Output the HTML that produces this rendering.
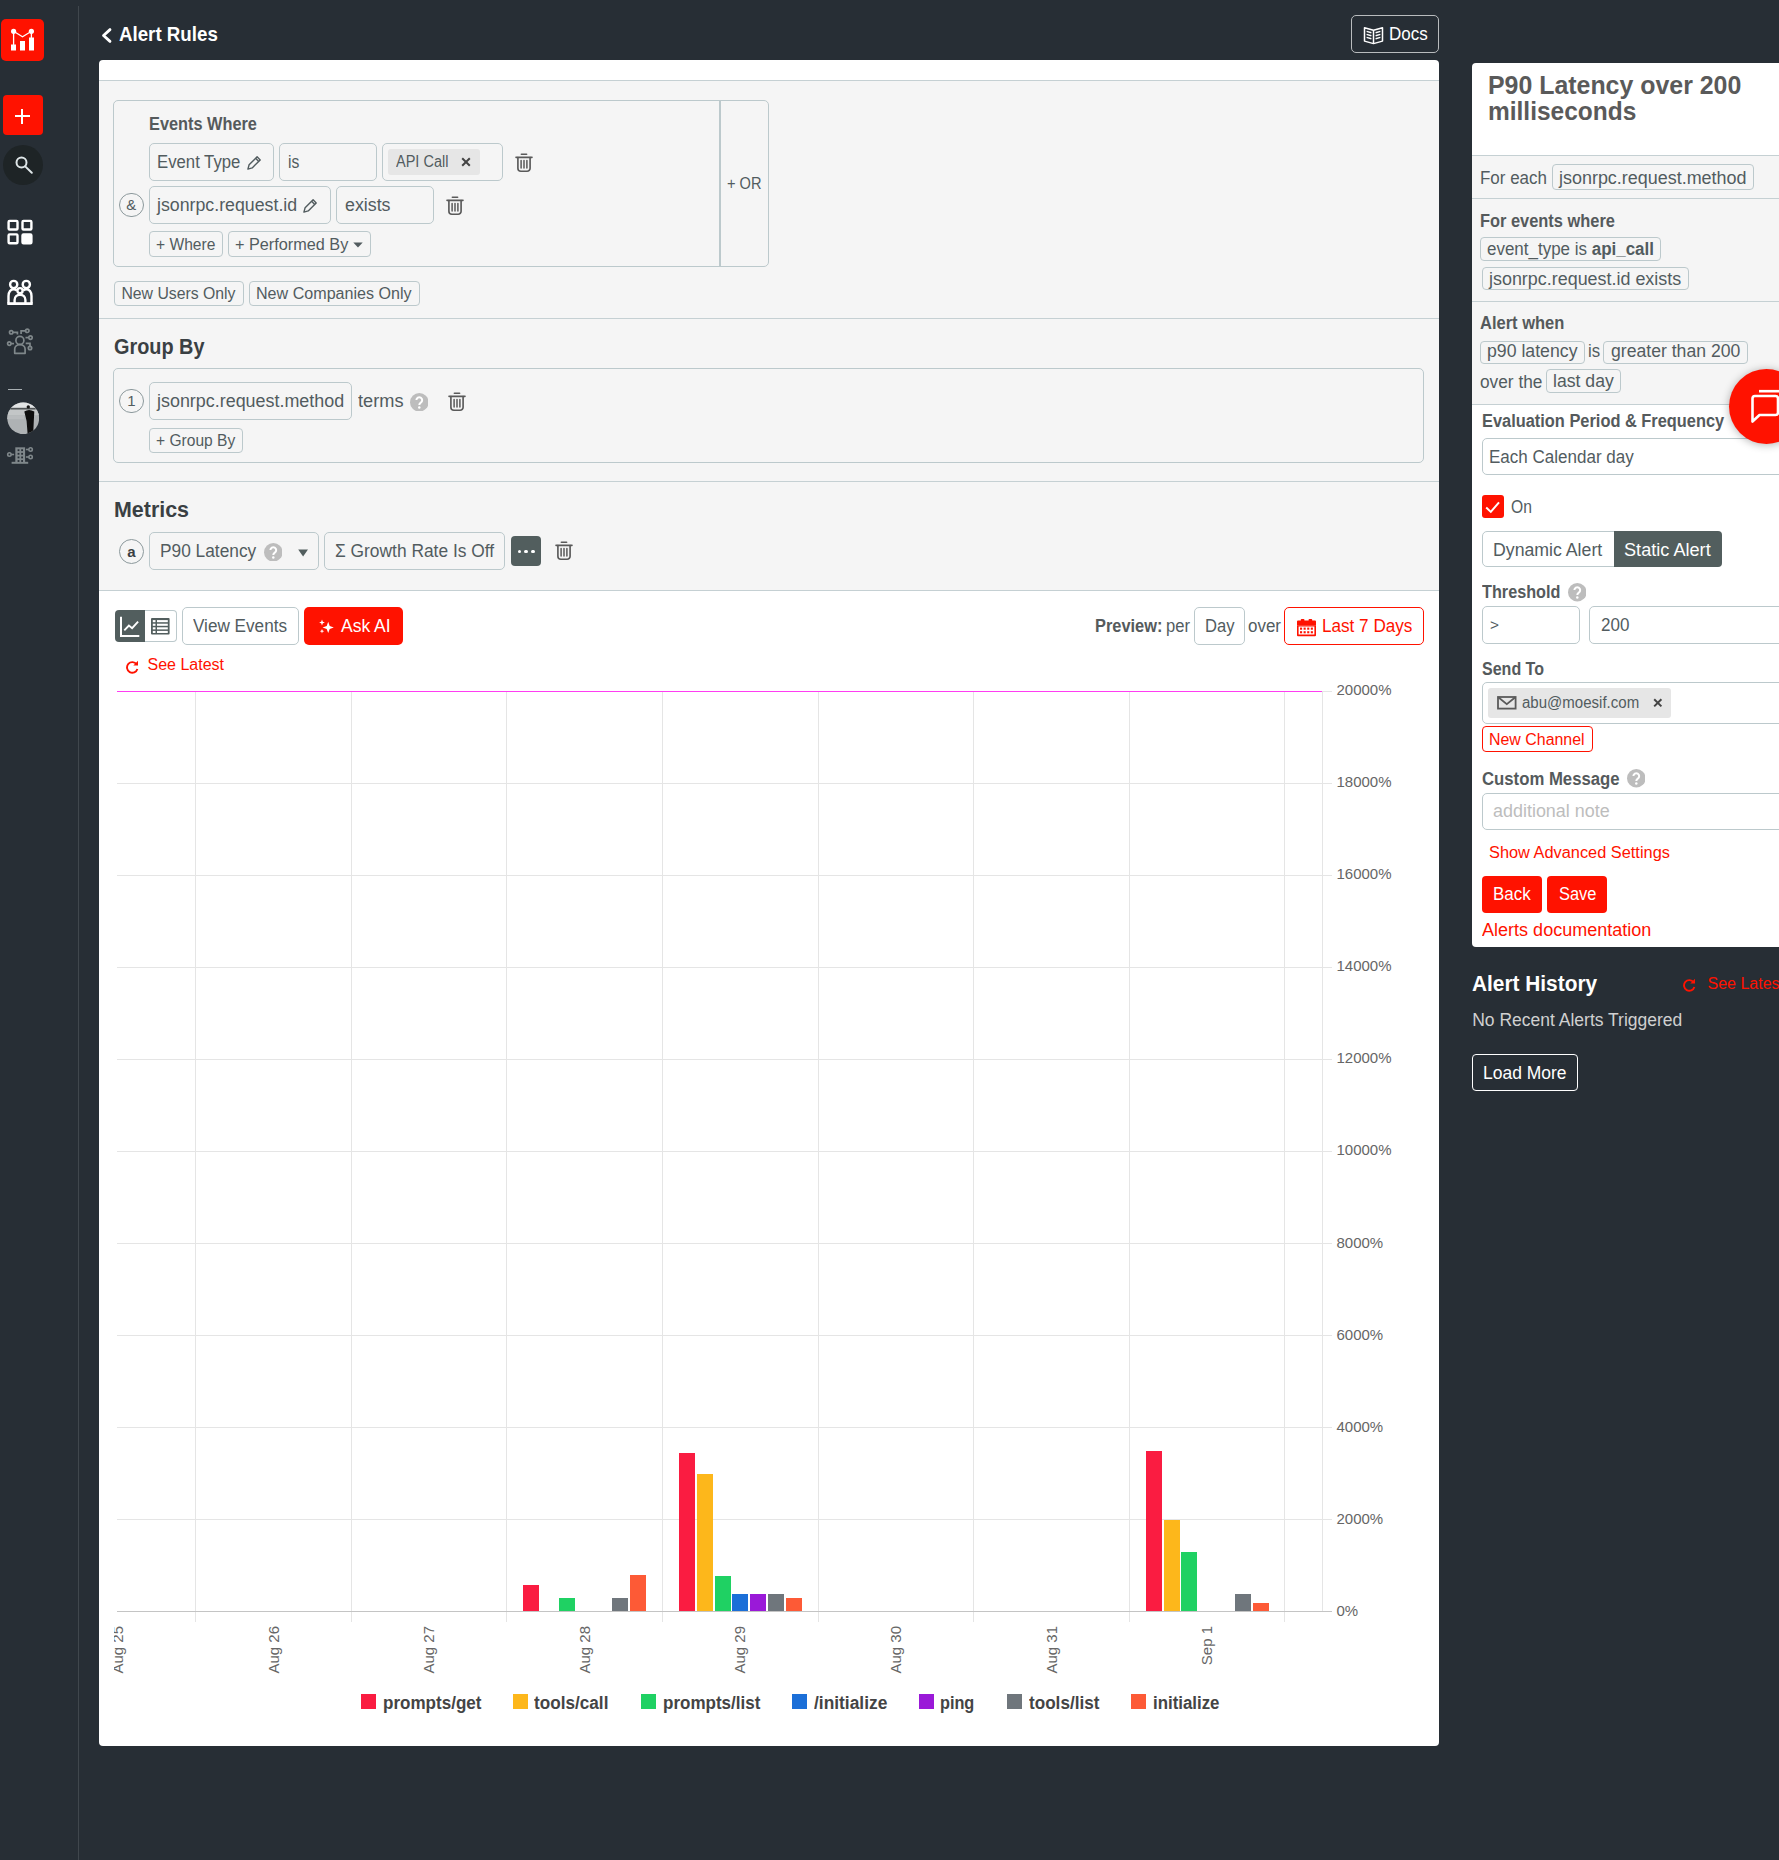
<!DOCTYPE html>
<html lang="en"><head><meta charset="utf-8"><title>Alert Rules</title>
<style>
*{margin:0;padding:0}
html,body{width:1779px;height:1860px;overflow:hidden;background:#272e35;}
body{position:relative;font-family:"Liberation Sans",sans-serif;}
.b{position:absolute;display:block}
.t{position:absolute;white-space:nowrap;line-height:1;transform-origin:0 0}
.xl{font-size:15px;line-height:16px;color:#666;white-space:nowrap;transform-origin:0 0;transform:rotate(-90deg) translate(-100%,-50%)}
b{font-weight:700}
</style></head>
<body>
<div class="b" style="left:78.0px;top:6.0px;width:1.0px;height:1854.0px;background:#40474d;"></div>
<div class="b" style="left:1.0px;top:19.0px;width:43.0px;height:42.0px;background:#ff1200;border-radius:5px;"></div>
<svg class="b" style="left:10.0px;top:28.0px;" width="25" height="24" viewBox="0 0 25 24"><g fill="#fff" stroke="none"><circle cx="3.6" cy="3.3" r="2.6"/><circle cx="21.4" cy="3.3" r="2.6"/><rect x="1" y="16.5" width="5" height="6"/><rect x="10" y="13" width="5" height="9.5"/><rect x="19" y="9.5" width="5" height="13"/></g><path d="M3.6 3.3v14M3.6 3.3l8.9 5.4 8.9-5.4v7" fill="none" stroke="#fff" stroke-width="1.3"/></svg>
<div class="b" style="left:3.0px;top:95.0px;width:40.0px;height:40.0px;background:#ff1200;border-radius:4px;"></div>
<div class="b" style="left:14.7px;top:115.0px;width:15.0px;height:2.0px;background:#fff;"></div>
<div class="b" style="left:21.2px;top:108.5px;width:2.0px;height:15.0px;background:#fff;"></div>
<div class="b" style="left:3.0px;top:145.0px;width:40.0px;height:40.0px;background:#1e2426;border-radius:20px;"></div>
<svg class="b" style="left:14.0px;top:155.0px;" width="20" height="20" viewBox="0 0 20 20"><g fill="none" stroke="#dfe6e8" stroke-width="2"><circle cx="7.5" cy="7.6" r="5"/><path d="M11.2 11.4l6.6 6.4" stroke-linecap="round"/></g></svg>
<svg class="b" style="left:7.0px;top:219.0px;" width="27" height="27" viewBox="0 0 27 27"><g fill="none" stroke="#fff" stroke-width="2.4" stroke-linejoin="round"><rect x="1.6" y="1.9" width="8.9" height="8.6" rx="1"/><rect x="15.5" y="1.9" width="8.9" height="8.6" rx="1"/><rect x="1.6" y="15.4" width="8.9" height="8.9" rx="1"/><rect x="15.5" y="15.4" width="8.9" height="8.9" rx="1" fill="#fff"/></g></svg>
<svg class="b" style="left:6.0px;top:278.0px;" width="28" height="28" viewBox="0 0 28 28"><g fill="none" stroke="#fff" stroke-width="2.4" stroke-linejoin="round"><circle cx="7.7" cy="6.5" r="3.6"/><circle cx="20.3" cy="6.5" r="3.6"/><path d="M2.5 25.5v-7.5c0-4 2.3-6.8 5.2-6.8 1.2 0 2.3 .5 3.2 1.3"/><path d="M25.5 25.5v-7.5c0-4-2.3-6.8-5.2-6.8-1.2 0-2.3 .5-3.2 1.3"/><circle cx="14" cy="12.7" r="2.6"/><path d="M8.6 25.5v-3.5c0-3.2 2.4-5.3 5.4-5.3s5.400 2.100 5.400 5.300v3.500"/><path d="M1.300 25.600h25.400" stroke-width="2.800"/></g></svg>
<svg class="b" style="left:6.0px;top:328.0px;" width="28" height="28" viewBox="0 0 28 28"><g fill="none" stroke="#7f878a" stroke-width="1.700"><circle cx="13.900" cy="12.400" r="4"/><path d="M8.700 25.300v-4.300c0-2.600 2.300-4.400 5.200-4.400s5.200 1.800 5.200 4.400v4.300z" stroke-linejoin="round"/><circle cx="5.200" cy="4.300" r="1.700"/><path d="M6.900 4.300h4.500v2.300"/><circle cx="21.300" cy="2.800" r="1.700"/><path d="M19.600 2.800h-4.500v3.300"/><circle cx="24.500" cy="9.600" r="1.700"/><path d="M22.800 9.600h-3.300"/><circle cx="3.300" cy="15.600" r="1.700"/><path d="M5 15.600h3"/><circle cx="24" cy="20" r="1.700"/><path d="M24 18.300v-3h-4.300"/></g></svg>
<div class="b" style="left:8.0px;top:389.0px;width:14.0px;height:1.3px;background:#a9b0b3;"></div>
<svg class="b" style="left:6.5px;top:401.5px;" width="32.5" height="32.5" viewBox="0 0 32.5 32.5"><defs><clipPath id="av"><circle cx="16.200" cy="16.300" r="15.900"/></clipPath></defs><g clip-path="url(#av)"><rect width="33" height="33" fill="#aeb2b4"/><rect width="33" height="6" fill="#e2e4e5"/><rect x="3.500" y="5.800" width="25" height="1.900" fill="#505456"/><rect y="7.700" width="33" height="5.500" fill="#c3c6c7"/><rect y="13.200" width="17" height="4" fill="#b9bcbe"/><circle cx="21.300" cy="4.900" r="1.700" fill="#151515"/><path d="M17.300 9.600Q21.800 6.300 27.300 9.600L26.800 19 26.200 32H20.600L19.600 19z" fill="#0f0f0f"/></g></svg>
<svg class="b" style="left:6.0px;top:445.0px;" width="28" height="20" viewBox="0 0 28 20"><g fill="none" stroke="#7f878a" stroke-width="1.600"><rect x="9.300" y="2.300" width="9.800" height="15.500" fill="#7f878a" stroke="none"/><path d="M5.600 17.800h16.600" stroke-width="2"/><circle cx="3.400" cy="9.500" r="1.700"/><path d="M5.100 9.500h3"/><circle cx="24.600" cy="4.500" r="1.700"/><path d="M22.900 4.500h-3"/><circle cx="24.600" cy="12" r="1.700"/><path d="M22.900 12h-3"/></g><g fill="#272e35"><rect x="11.6" y="4.3" width="1.800" height="1.800"/><rect x="11.6" y="7.9" width="1.800" height="1.800"/><rect x="11.6" y="11.5" width="1.800" height="1.800"/><rect x="11.6" y="15.1" width="1.800" height="1.800"/><rect x="15.2" y="4.3" width="1.800" height="1.800"/><rect x="15.2" y="7.9" width="1.800" height="1.800"/><rect x="15.2" y="11.5" width="1.800" height="1.800"/><rect x="15.2" y="15.1" width="1.800" height="1.800"/></g></svg>
<svg class="b" style="left:100.0px;top:26.0px;" width="14" height="19" viewBox="0 0 14 19"><path d="M10 3.600L3.500 9.500l6.500 5.900" fill="none" stroke="#fff" stroke-width="2.800" stroke-linecap="round" stroke-linejoin="round"/></svg>
<div class="t" style="left:119.00px;top:23.80px;font-size:20.5px;color:#fff;font-weight:700;transform:scaleX(0.9128);">Alert Rules</div>
<div class="b" style="left:1351.0px;top:15.0px;width:88.0px;height:38.0px;border:1px solid #b9bcbe;border-radius:5px;box-sizing:border-box;"></div>
<svg class="b" style="left:1363.0px;top:25.5px;" width="21" height="19" viewBox="0 0 21 19"><g fill="none" stroke="#fff" stroke-width="1.500" stroke-linejoin="round"><path d="M10.500 4.300L1.500 1.800v13.300l9 2.500 9-2.500V1.800z"/><path d="M10.500 4.300v13.300"/><path d="M3.600 5.400l4.800 1.300M3.600 8.400l4.800 1.300M3.600 11.400l4.800 1.300M17.400 5.400l-4.800 1.300M17.400 8.400l-4.800 1.300M17.400 11.400l-4.800 1.300" stroke-width="1.400"/></g></svg>
<div class="t" style="left:1388.80px;top:25.60px;font-size:17.5px;color:#fff;transform:scaleX(0.9705);">Docs</div>
<div class="b" style="left:99.0px;top:60.0px;width:1340.0px;height:1686.0px;background:#fff;border-radius:4px;"></div>
<div class="b" style="left:99.0px;top:80.0px;width:1340.0px;height:511.0px;background:#f5f5f5;"></div>
<div class="b" style="left:99.0px;top:80.0px;width:1340.0px;height:1.0px;background:#c5d0d3;"></div>
<div class="b" style="left:99.0px;top:318.0px;width:1340.0px;height:1.0px;background:#c5d0d3;"></div>
<div class="b" style="left:99.0px;top:481.0px;width:1340.0px;height:1.0px;background:#c5d0d3;"></div>
<div class="b" style="left:99.0px;top:590.0px;width:1340.0px;height:1.0px;background:#c5d0d3;"></div>
<div class="b" style="left:113.0px;top:100.0px;width:655.5px;height:166.5px;border:1px solid #bcc9cc;border-radius:5px;box-sizing:border-box;"></div>
<div class="b" style="left:719.0px;top:100.0px;width:2.0px;height:166.5px;background:#bcc9cc;"></div>
<div class="t" style="left:148.80px;top:115.70px;font-size:17.5px;color:#555a5c;font-weight:700;transform:scaleX(0.9323);">Events Where</div>
<div class="b" style="left:149.0px;top:143.0px;width:125.0px;height:38.0px;border:1px solid #bcc9cc;border-radius:5px;box-sizing:border-box;"></div>
<div class="t" style="left:156.60px;top:153.90px;font-size:17.5px;color:#525c5f;transform:scaleX(0.9559);">Event Type</div>
<svg class="b" style="left:246.5px;top:155.5px;" width="14" height="14" viewBox="0 0 14 14"><g fill="none" stroke="#525c5f" stroke-width="1.4" stroke-linejoin="round"><path d="M0.9 13.1l1.2-4.3 8-8 3.1 3.1-8 8z"/><path d="M8.6 2.3l3.1 3.1"/></g></svg>
<div class="b" style="left:279.0px;top:143.0px;width:97.5px;height:38.0px;border:1px solid #bcc9cc;border-radius:5px;box-sizing:border-box;"></div>
<div class="t" style="left:288.20px;top:153.90px;font-size:17.5px;color:#525c5f;transform:scaleX(0.8939);">is</div>
<div class="b" style="left:382.0px;top:143.0px;width:120.5px;height:38.0px;border:1px solid #bcc9cc;border-radius:5px;box-sizing:border-box;"></div>
<div class="b" style="left:388.0px;top:149.3px;width:92.0px;height:25.4px;background:#e6e6e6;border-radius:3px;"></div>
<div class="t" style="left:395.80px;top:153.70px;font-size:15.8px;color:#525c5f;transform:scaleX(0.9180);">API Call</div>
<svg class="b" style="left:461.0px;top:157.0px;" width="10" height="10" viewBox="0 0 10 10"><path d="M1.200 1.200l7.600 7.600M8.800 1.200L1.200 8.800" stroke="#444" stroke-width="2" fill="none"/></svg>
<svg class="b" style="left:515.3px;top:153.1px;" width="18" height="20" viewBox="0 0 18 20"><g fill="none" stroke="#5a5a5a" stroke-width="1.65" stroke-linecap="round"><path d="M6.4 1.2h5.2"/><path d="M1 4.3h16"/><path d="M2.9 4.6v10.6a3 3 0 0 0 3 3h6.2a3 3 0 0 0 3-3V4.6"/><path d="M6.1 7.4v7.6M9 7.4v7.6M11.9 7.4v7.6" stroke-width="1.5"/></g></svg>
<div class="b" style="left:119.0px;top:192.9px;width:24.6px;height:24.6px;border:1px solid #8c999c;border-radius:20px;box-sizing:border-box;"></div>
<div class="t" style="left:126.29px;top:197.40px;font-size:15px;color:#525c5f;">&amp;</div>
<div class="b" style="left:149.0px;top:186.3px;width:182.0px;height:37.7px;border:1px solid #bcc9cc;border-radius:5px;box-sizing:border-box;"></div>
<div class="t" style="left:156.60px;top:196.80px;font-size:17.5px;color:#525c5f;transform:scaleX(1.0149);">jsonrpc.request.id</div>
<svg class="b" style="left:302.8px;top:198.5px;" width="14" height="14" viewBox="0 0 14 14"><g fill="none" stroke="#525c5f" stroke-width="1.4" stroke-linejoin="round"><path d="M0.9 13.1l1.2-4.3 8-8 3.1 3.1-8 8z"/><path d="M8.6 2.3l3.1 3.1"/></g></svg>
<div class="b" style="left:336.0px;top:186.3px;width:97.8px;height:37.7px;border:1px solid #bcc9cc;border-radius:5px;box-sizing:border-box;"></div>
<div class="t" style="left:345.00px;top:196.80px;font-size:17.5px;color:#525c5f;transform:scaleX(1.0171);">exists</div>
<svg class="b" style="left:446.0px;top:195.5px;" width="18" height="20" viewBox="0 0 18 20"><g fill="none" stroke="#5a5a5a" stroke-width="1.65" stroke-linecap="round"><path d="M6.4 1.2h5.2"/><path d="M1 4.3h16"/><path d="M2.9 4.6v10.6a3 3 0 0 0 3 3h6.2a3 3 0 0 0 3-3V4.6"/><path d="M6.1 7.4v7.6M9 7.4v7.6M11.9 7.4v7.6" stroke-width="1.5"/></g></svg>
<div class="b" style="left:149.0px;top:231.0px;width:73.8px;height:26.0px;border:1px solid #bcc9cc;border-radius:4px;box-sizing:border-box;"></div>
<div class="t" style="left:156.00px;top:236.80px;font-size:15.8px;color:#525c5f;transform:scaleX(0.9874);">+ Where</div>
<div class="b" style="left:228.3px;top:231.0px;width:142.4px;height:26.0px;border:1px solid #bcc9cc;border-radius:4px;box-sizing:border-box;"></div>
<div class="t" style="left:234.70px;top:236.80px;font-size:15.8px;color:#525c5f;transform:scaleX(1.0282);">+ Performed By</div>
<svg class="b" style="left:353.0px;top:241.5px;" width="10" height="6" viewBox="0 0 10 6"><path d="M0.300 0.500h9.400L5 5.600z" fill="#525c5f"/></svg>
<div class="t" style="left:727.00px;top:176.30px;font-size:15.8px;color:#525c5f;transform:scaleX(0.9246);">+ OR</div>
<div class="b" style="left:114.0px;top:281.0px;width:129.5px;height:25.0px;border:1px solid #bcc9cc;border-radius:4px;box-sizing:border-box;"></div>
<div class="t" style="left:121.40px;top:285.80px;font-size:15.8px;color:#525c5f;">New Users Only</div>
<div class="b" style="left:249.0px;top:281.0px;width:170.8px;height:25.0px;border:1px solid #bcc9cc;border-radius:4px;box-sizing:border-box;"></div>
<div class="t" style="left:256.30px;top:285.80px;font-size:15.8px;color:#525c5f;transform:scaleX(1.0186);">New Companies Only</div>
<div class="t" style="left:114.00px;top:335.50px;font-size:22.5px;color:#3a4043;font-weight:700;transform:scaleX(0.8828);">Group By</div>
<div class="b" style="left:113.0px;top:368.0px;width:1310.5px;height:94.5px;border:1px solid #bcc9cc;border-radius:5px;box-sizing:border-box;"></div>
<div class="b" style="left:119.0px;top:388.7px;width:24.6px;height:24.6px;border:1px solid #8c999c;border-radius:20px;box-sizing:border-box;"></div>
<div class="t" style="left:127.13px;top:393.20px;font-size:15px;color:#525c5f;">1</div>
<div class="b" style="left:149.0px;top:382.0px;width:202.8px;height:37.8px;border:1px solid #bcc9cc;border-radius:5px;box-sizing:border-box;"></div>
<div class="t" style="left:156.60px;top:392.70px;font-size:17.5px;color:#525c5f;transform:scaleX(1.0236);">jsonrpc.request.method</div>
<div class="t" style="left:357.50px;top:392.70px;font-size:17.5px;color:#525c5f;transform:scaleX(1.0400);">terms</div>
<svg class="b" style="left:409.5px;top:392.7px;" width="18.6" height="18.6" viewBox="0 0 18.6 18.6"><circle cx="9.3" cy="9.3" r="9.3" fill="#bdbdbd"/><path d="M6.4 7.1000000000000005a2.9 2.9 0 1 1 4.4 2.5c-1 .7-1.5 1.2-1.5 2.4" fill="none" stroke="#fff" stroke-width="2"/><circle cx="9.3" cy="14.600000000000001" r="1.25" fill="#fff"/></svg>
<svg class="b" style="left:447.5px;top:391.5px;" width="18" height="20" viewBox="0 0 18 20"><g fill="none" stroke="#5a5a5a" stroke-width="1.65" stroke-linecap="round"><path d="M6.4 1.2h5.2"/><path d="M1 4.3h16"/><path d="M2.9 4.6v10.6a3 3 0 0 0 3 3h6.2a3 3 0 0 0 3-3V4.6"/><path d="M6.1 7.4v7.6M9 7.4v7.6M11.9 7.4v7.6" stroke-width="1.5"/></g></svg>
<div class="b" style="left:149.0px;top:428.0px;width:94.0px;height:25.0px;border:1px solid #bcc9cc;border-radius:4px;box-sizing:border-box;"></div>
<div class="t" style="left:156.00px;top:432.80px;font-size:15.8px;color:#525c5f;transform:scaleX(0.9858);">+ Group By</div>
<div class="t" style="left:114.00px;top:499.00px;font-size:22.5px;color:#3a4043;font-weight:700;transform:scaleX(0.9518);">Metrics</div>
<div class="b" style="left:119.2px;top:539.2px;width:24.6px;height:24.6px;border:1px solid #8c999c;border-radius:20px;box-sizing:border-box;"></div>
<div class="t" style="left:127.33px;top:543.70px;font-size:15px;color:#3a4043;font-weight:700;">a</div>
<div class="b" style="left:149.0px;top:532.0px;width:170.0px;height:37.7px;border:1px solid #bcc9cc;border-radius:5px;box-sizing:border-box;"></div>
<div class="t" style="left:160.20px;top:543.10px;font-size:17.5px;color:#525c5f;transform:scaleX(0.9887);">P90 Latency</div>
<svg class="b" style="left:263.9px;top:542.7px;" width="18.6" height="18.6" viewBox="0 0 18.6 18.6"><circle cx="9.3" cy="9.3" r="9.3" fill="#bdbdbd"/><path d="M6.4 7.1000000000000005a2.9 2.9 0 1 1 4.4 2.5c-1 .7-1.5 1.2-1.5 2.4" fill="none" stroke="#fff" stroke-width="2"/><circle cx="9.3" cy="14.600000000000001" r="1.25" fill="#fff"/></svg>
<svg class="b" style="left:298.0px;top:548.5px;" width="11" height="8" viewBox="0 0 11 8"><path d="M0.200 0.500h9.800L5.100 7.500z" fill="#525e5e"/></svg>
<div class="b" style="left:324.2px;top:532.0px;width:180.5px;height:37.7px;border:1px solid #bcc9cc;border-radius:5px;box-sizing:border-box;"></div>
<div class="t" style="left:334.50px;top:543.10px;font-size:17.5px;color:#525c5f;transform:scaleX(0.9926);">&Sigma; Growth Rate Is Off</div>
<div class="b" style="left:511.0px;top:535.7px;width:30.2px;height:30.5px;background:#525e5e;border-radius:4px;"></div>
<div class="b" style="left:517.7px;top:549.5px;width:3.8px;height:3.8px;background:#fff;border-radius:2px;"></div>
<div class="b" style="left:524.3px;top:549.5px;width:3.8px;height:3.8px;background:#fff;border-radius:2px;"></div>
<div class="b" style="left:530.9px;top:549.5px;width:3.8px;height:3.8px;background:#fff;border-radius:2px;"></div>
<svg class="b" style="left:554.5px;top:541.0px;" width="18" height="20" viewBox="0 0 18 20"><g fill="none" stroke="#5a5a5a" stroke-width="1.65" stroke-linecap="round"><path d="M6.4 1.2h5.2"/><path d="M1 4.3h16"/><path d="M2.9 4.6v10.6a3 3 0 0 0 3 3h6.2a3 3 0 0 0 3-3V4.6"/><path d="M6.1 7.4v7.6M9 7.4v7.6M11.9 7.4v7.6" stroke-width="1.5"/></g></svg>
<div class="b" style="left:114.7px;top:610.3px;width:30.3px;height:31.4px;background:#525e5e;border-radius:4px 0 0 4px;"></div>
<div class="b" style="left:145.0px;top:610.3px;width:31.7px;height:31.4px;background:#fff;border:1px solid #bcc9cc;border-radius:0 4px 4px 0;box-sizing:border-box;border-left:none;"></div>
<svg class="b" style="left:119.0px;top:615.0px;" width="22" height="23" viewBox="0 0 22 23"><g fill="none" stroke="#fff" stroke-width="2"><path d="M2 1.800v19.300h18.300" stroke-linejoin="miter"/><path d="M5.300 15.300l4.600-4.700 3.200 2.600 6-6.600" stroke-width="1.900"/></g></svg>
<svg class="b" style="left:151.0px;top:618.0px;" width="19" height="17" viewBox="0 0 19 17"><rect x="0" y="0" width="18.600" height="16.600" rx="1" fill="#525e5e"/><rect x="1.800" y="2.1" width="2.700" height="2.100" fill="#fff"/><rect x="6" y="2.1" width="10.800" height="2.100" fill="#fff"/><rect x="1.800" y="5.7" width="2.700" height="2.100" fill="#fff"/><rect x="6" y="5.7" width="10.800" height="2.100" fill="#fff"/><rect x="1.800" y="9.3" width="2.700" height="2.100" fill="#fff"/><rect x="6" y="9.3" width="10.800" height="2.100" fill="#fff"/><rect x="1.800" y="12.9" width="2.700" height="2.100" fill="#fff"/><rect x="6" y="12.9" width="10.800" height="2.100" fill="#fff"/></svg>
<div class="b" style="left:182.3px;top:607.3px;width:116.4px;height:37.4px;background:#fff;border:1px solid #bcc9cc;border-radius:5px;box-sizing:border-box;"></div>
<div class="t" style="left:193.00px;top:617.70px;font-size:17.5px;color:#525c5f;transform:scaleX(0.9793);">View Events</div>
<div class="b" style="left:304.0px;top:607.0px;width:99.0px;height:38.0px;background:#ff1200;border-radius:5px;"></div>
<svg class="b" style="left:319.0px;top:619.0px;" width="16" height="16" viewBox="0 0 16 16"><g fill="#fff"><path d="M9.200 2.800l1.500 4.100 4.100 1.500-4.100 1.500-1.500 4.100-1.500-4.100-4.100-1.500 4.100-1.500z"/><path d="M3 .6l.8 2.100 2.100 .8-2.100 .8L3 6.400l-.8-2.100L.1 3.500l2.100-.8z"/><path d="M3 10l.6 1.600 1.600 .6-1.600 .6L3 14.400l-.6-1.600-1.600-.6 1.600-.6z"/></g></svg>
<div class="t" style="left:341.00px;top:617.60px;font-size:17.5px;color:#fff;">Ask AI</div>
<svg class="b" style="left:125.3px;top:659.5px;" width="14" height="14" viewBox="0 0 14 14"><path d="M11.600 4.300A5.300 5.300 0 1 0 12.400 9" fill="none" stroke="#ff1200" stroke-width="1.900"/><path d="M13 0.800v4.800H8.300z" fill="#ff1200"/></svg>
<div class="t" style="left:147.50px;top:657.00px;font-size:16px;color:#ff1200;">See Latest</div>
<div class="t" style="left:1094.60px;top:617.70px;font-size:17.5px;color:#555a5c;font-weight:700;transform:scaleX(0.9363);">Preview:</div>
<div class="t" style="left:1166.00px;top:617.70px;font-size:17.5px;color:#525c5f;transform:scaleX(0.9487);">per</div>
<div class="b" style="left:1194.0px;top:607.3px;width:50.7px;height:37.4px;background:#fff;border:1px solid #bcc9cc;border-radius:5px;box-sizing:border-box;"></div>
<div class="t" style="left:1204.50px;top:617.70px;font-size:17.5px;color:#525c5f;transform:scaleX(0.9478);">Day</div>
<div class="t" style="left:1248.00px;top:617.70px;font-size:17.5px;color:#525c5f;transform:scaleX(0.9693);">over</div>
<div class="b" style="left:1284.0px;top:607.0px;width:140.3px;height:38.0px;background:#fff;border:1.5px solid #ff1200;border-radius:5px;box-sizing:border-box;"></div>
<svg class="b" style="left:1297.0px;top:618.5px;" width="19" height="18" viewBox="0 0 19 18"><g fill="#ff1200"><rect x="3.800" y="0" width="3.600" height="3" rx="0.800"/><rect x="11.600" y="0" width="3.600" height="3" rx="0.800"/><path d="M0 2.400a1 1 0 0 1 1-1h17a1 1 0 0 1 1 1v3.800H0z"/><path d="M0 6.200h19v10a1 1 0 0 1-1 1H1a1 1 0 0 1-1-1z M1.600 7.400v8.200h15.800V7.400z" fill-rule="evenodd"/><rect x="3" y="8.6" width="2.100" height="2.100"/><rect x="3" y="12.2" width="2.100" height="2.100"/><rect x="6.6" y="8.6" width="2.100" height="2.100"/><rect x="6.6" y="12.2" width="2.100" height="2.100"/><rect x="10.2" y="8.6" width="2.100" height="2.100"/><rect x="10.2" y="12.2" width="2.100" height="2.100"/><rect x="13.8" y="8.6" width="2.100" height="2.100"/><rect x="13.8" y="12.2" width="2.100" height="2.100"/></g></svg>
<div class="t" style="left:1321.80px;top:617.70px;font-size:17.5px;color:#ff1200;transform:scaleX(0.9783);">Last 7 Days</div>
<div class="b" style="left:117.4px;top:691.0px;width:1214.6px;height:1.0px;background:#e5e5e5;"></div>
<div class="b" style="left:117.4px;top:783.0px;width:1214.6px;height:1.0px;background:#e5e5e5;"></div>
<div class="b" style="left:117.4px;top:875.0px;width:1214.6px;height:1.0px;background:#e5e5e5;"></div>
<div class="b" style="left:117.4px;top:967.0px;width:1214.6px;height:1.0px;background:#e5e5e5;"></div>
<div class="b" style="left:117.4px;top:1059.0px;width:1214.6px;height:1.0px;background:#e5e5e5;"></div>
<div class="b" style="left:117.4px;top:1151.0px;width:1214.6px;height:1.0px;background:#e5e5e5;"></div>
<div class="b" style="left:117.4px;top:1243.0px;width:1214.6px;height:1.0px;background:#e5e5e5;"></div>
<div class="b" style="left:117.4px;top:1335.0px;width:1214.6px;height:1.0px;background:#e5e5e5;"></div>
<div class="b" style="left:117.4px;top:1427.0px;width:1214.6px;height:1.0px;background:#e5e5e5;"></div>
<div class="b" style="left:117.4px;top:1519.0px;width:1214.6px;height:1.0px;background:#e5e5e5;"></div>
<div class="b" style="left:195.0px;top:691.0px;width:1.0px;height:930.5px;background:#e5e5e5;"></div>
<div class="b" style="left:351.0px;top:691.0px;width:1.0px;height:930.5px;background:#e5e5e5;"></div>
<div class="b" style="left:506.0px;top:691.0px;width:1.0px;height:930.5px;background:#e5e5e5;"></div>
<div class="b" style="left:662.0px;top:691.0px;width:1.0px;height:930.5px;background:#e5e5e5;"></div>
<div class="b" style="left:818.0px;top:691.0px;width:1.0px;height:930.5px;background:#e5e5e5;"></div>
<div class="b" style="left:973.0px;top:691.0px;width:1.0px;height:930.5px;background:#e5e5e5;"></div>
<div class="b" style="left:1129.0px;top:691.0px;width:1.0px;height:930.5px;background:#e5e5e5;"></div>
<div class="b" style="left:1284.0px;top:691.0px;width:1.0px;height:930.5px;background:#e5e5e5;"></div>
<div class="b" style="left:1322.0px;top:691.0px;width:1.0px;height:920.0px;background:#e5e5e5;"></div>
<div class="b" style="left:117.4px;top:1611.0px;width:1214.6px;height:1.3px;background:#c4c4c4;"></div>
<div class="b" style="left:117.4px;top:690.6px;width:1205.1px;height:1.4px;background:#ff3df2;"></div>
<div class="t" style="left:1336.50px;top:681.95px;font-size:15px;color:#666;">20000%</div>
<div class="t" style="left:1336.50px;top:774.05px;font-size:15px;color:#666;">18000%</div>
<div class="t" style="left:1336.50px;top:866.15px;font-size:15px;color:#666;">16000%</div>
<div class="t" style="left:1336.50px;top:958.25px;font-size:15px;color:#666;">14000%</div>
<div class="t" style="left:1336.50px;top:1050.35px;font-size:15px;color:#666;">12000%</div>
<div class="t" style="left:1336.50px;top:1142.45px;font-size:15px;color:#666;">10000%</div>
<div class="t" style="left:1336.50px;top:1234.55px;font-size:15px;color:#666;">8000%</div>
<div class="t" style="left:1336.50px;top:1326.65px;font-size:15px;color:#666;">6000%</div>
<div class="t" style="left:1336.50px;top:1418.75px;font-size:15px;color:#666;">4000%</div>
<div class="t" style="left:1336.50px;top:1510.85px;font-size:15px;color:#666;">2000%</div>
<div class="t" style="left:1336.50px;top:1602.95px;font-size:15px;color:#666;">0%</div>
<div class="b" style="left:523.4px;top:1585.0px;width:16.0px;height:26.3px;background:#fa1c41;"></div>
<div class="b" style="left:559.0px;top:1598.0px;width:16.0px;height:13.3px;background:#1fd163;"></div>
<div class="b" style="left:612.3px;top:1598.0px;width:16.0px;height:13.3px;background:#6f767c;"></div>
<div class="b" style="left:630.1px;top:1574.7px;width:16.0px;height:36.6px;background:#fd5a36;"></div>
<div class="b" style="left:679.0px;top:1452.7px;width:16.0px;height:158.6px;background:#fa1c41;"></div>
<div class="b" style="left:696.8px;top:1474.0px;width:16.0px;height:137.3px;background:#fdb71b;"></div>
<div class="b" style="left:714.6px;top:1576.0px;width:16.0px;height:35.3px;background:#1fd163;"></div>
<div class="b" style="left:732.3px;top:1593.6px;width:16.0px;height:17.7px;background:#1b6fd8;"></div>
<div class="b" style="left:750.1px;top:1593.6px;width:16.0px;height:17.7px;background:#9a19d8;"></div>
<div class="b" style="left:767.9px;top:1593.6px;width:16.0px;height:17.7px;background:#6f767c;"></div>
<div class="b" style="left:785.7px;top:1598.3px;width:16.0px;height:13.0px;background:#fd5a36;"></div>
<div class="b" style="left:1145.8px;top:1450.8px;width:16.0px;height:160.5px;background:#fa1c41;"></div>
<div class="b" style="left:1163.6px;top:1519.6px;width:16.0px;height:91.7px;background:#fdb71b;"></div>
<div class="b" style="left:1181.4px;top:1552.0px;width:16.0px;height:59.3px;background:#1fd163;"></div>
<div class="b" style="left:1234.7px;top:1593.6px;width:16.0px;height:17.7px;background:#6f767c;"></div>
<div class="b" style="left:1252.5px;top:1603.0px;width:16.0px;height:8.3px;background:#fd5a36;"></div>
<div class="b xl" style="left:118.0px;top:1626px;">Aug 25</div>
<div class="b xl" style="left:273.6px;top:1626px;">Aug 26</div>
<div class="b xl" style="left:429.2px;top:1626px;">Aug 27</div>
<div class="b xl" style="left:584.8px;top:1626px;">Aug 28</div>
<div class="b xl" style="left:740.4px;top:1626px;">Aug 29</div>
<div class="b xl" style="left:896.0px;top:1626px;">Aug 30</div>
<div class="b xl" style="left:1051.6px;top:1626px;">Aug 31</div>
<div class="b xl" style="left:1207.2px;top:1626px;">Sep 1</div>
<div class="b" style="left:99.0px;top:1620.0px;width:15.0px;height:70.0px;background:#fff;"></div>
<div class="b" style="left:361.0px;top:1694.0px;width:15.0px;height:15.0px;background:#fa1c41;"></div>
<div class="t" style="left:382.50px;top:1695.00px;font-size:17.5px;color:#444444;font-weight:700;transform:scaleX(0.9740);">prompts/get</div>
<div class="b" style="left:512.8px;top:1694.0px;width:15.0px;height:15.0px;background:#fdb71b;"></div>
<div class="t" style="left:534.40px;top:1695.00px;font-size:17.5px;color:#444444;font-weight:700;transform:scaleX(0.9808);">tools/call</div>
<div class="b" style="left:641.4px;top:1694.0px;width:15.0px;height:15.0px;background:#1fd163;"></div>
<div class="t" style="left:662.70px;top:1695.00px;font-size:17.5px;color:#444444;font-weight:700;transform:scaleX(0.9715);">prompts/list</div>
<div class="b" style="left:792.0px;top:1694.0px;width:15.0px;height:15.0px;background:#1b6fd8;"></div>
<div class="t" style="left:813.70px;top:1695.00px;font-size:17.5px;color:#444444;font-weight:700;transform:scaleX(0.9918);">/initialize</div>
<div class="b" style="left:918.8px;top:1694.0px;width:15.0px;height:15.0px;background:#9a19d8;"></div>
<div class="t" style="left:940.40px;top:1695.00px;font-size:17.5px;color:#444444;font-weight:700;transform:scaleX(0.9286);">ping</div>
<div class="b" style="left:1007.0px;top:1694.0px;width:15.0px;height:15.0px;background:#6f767c;"></div>
<div class="t" style="left:1028.60px;top:1695.00px;font-size:17.5px;color:#444444;font-weight:700;transform:scaleX(0.9784);">tools/list</div>
<div class="b" style="left:1131.0px;top:1694.0px;width:15.0px;height:15.0px;background:#fd5a36;"></div>
<div class="t" style="left:1152.50px;top:1695.00px;font-size:17.5px;color:#444444;font-weight:700;transform:scaleX(0.9631);">initialize</div>
<div class="b" style="left:1472.0px;top:63.0px;width:317.0px;height:883.5px;background:#fff;border-radius:4px 0 0 4px;"></div>
<div class="b" style="left:1472.0px;top:155.5px;width:307.0px;height:249.0px;background:#f5f5f5;"></div>
<div class="b" style="left:1472.0px;top:155.0px;width:307.0px;height:1.0px;background:#c5d0d3;"></div>
<div class="b" style="left:1472.0px;top:198.0px;width:307.0px;height:1.0px;background:#c5d0d3;"></div>
<div class="b" style="left:1472.0px;top:301.0px;width:307.0px;height:1.0px;background:#c5d0d3;"></div>
<div class="b" style="left:1472.0px;top:404.0px;width:307.0px;height:1.0px;background:#c5d0d3;"></div>
<div class="t" style="left:1487.70px;top:73.00px;font-size:25.5px;color:#5a5a5a;font-weight:700;transform:scaleX(0.9764);">P90 Latency over 200</div>
<div class="t" style="left:1487.70px;top:98.90px;font-size:25.5px;color:#5a5a5a;font-weight:700;transform:scaleX(0.9600);">milliseconds</div>
<div class="t" style="left:1479.60px;top:169.70px;font-size:17.5px;color:#525c5f;transform:scaleX(0.9687);">For each</div>
<div class="b" style="left:1552.3px;top:164.2px;width:201.5px;height:26.3px;border:1px solid #bcc9cc;border-radius:4px;box-sizing:border-box;"></div>
<div class="t" style="left:1559.30px;top:169.70px;font-size:17.5px;color:#525c5f;transform:scaleX(1.0252);">jsonrpc.request.method</div>
<div class="t" style="left:1479.60px;top:212.70px;font-size:17.5px;color:#555a5c;font-weight:700;transform:scaleX(0.9371);">For events where</div>
<div class="b" style="left:1479.6px;top:237.0px;width:181.1px;height:24.4px;border:1px solid #bcc9cc;border-radius:4px;box-sizing:border-box;"></div>
<div class="t" style="left:1486.50px;top:241.20px;font-size:17.5px;color:#525c5f;transform:scaleX(0.9698);">event_type is <b>api_call</b></div>
<div class="b" style="left:1482.3px;top:267.3px;width:206.4px;height:23.2px;border:1px solid #bcc9cc;border-radius:4px;box-sizing:border-box;"></div>
<div class="t" style="left:1489.30px;top:270.80px;font-size:17.5px;color:#525c5f;transform:scaleX(1.0238);">jsonrpc.request.id exists</div>
<div class="t" style="left:1479.60px;top:314.70px;font-size:17.5px;color:#555a5c;font-weight:700;transform:scaleX(0.9433);">Alert when</div>
<div class="b" style="left:1479.5px;top:340.5px;width:105.3px;height:23.3px;border:1px solid #bcc9cc;border-radius:4px;box-sizing:border-box;"></div>
<div class="t" style="left:1486.50px;top:343.30px;font-size:17.5px;color:#525c5f;transform:scaleX(1.0110);">p90 latency</div>
<div class="t" style="left:1587.50px;top:343.30px;font-size:17.5px;color:#525c5f;transform:scaleX(0.9572);">is</div>
<div class="b" style="left:1603.4px;top:340.5px;width:144.4px;height:23.3px;border:1px solid #bcc9cc;border-radius:4px;box-sizing:border-box;"></div>
<div class="t" style="left:1610.50px;top:343.30px;font-size:17.5px;color:#525c5f;transform:scaleX(1.0067);">greater than 200</div>
<div class="t" style="left:1479.60px;top:374.00px;font-size:17.5px;color:#525c5f;transform:scaleX(0.9868);">over the</div>
<div class="b" style="left:1545.5px;top:369.3px;width:75.2px;height:24.2px;border:1px solid #bcc9cc;border-radius:4px;box-sizing:border-box;"></div>
<div class="t" style="left:1552.50px;top:373.20px;font-size:17.5px;color:#525c5f;transform:scaleX(1.0081);">last day</div>
<div class="t" style="left:1481.80px;top:412.80px;font-size:17.5px;color:#555a5c;font-weight:700;transform:scaleX(0.9363);">Evaluation Period &amp; Frequency</div>
<div class="b" style="left:1482.2px;top:438.2px;width:306.8px;height:36.6px;background:#fff;border:1px solid #bcc9cc;border-radius:5px;box-sizing:border-box;"></div>
<div class="t" style="left:1489.20px;top:448.70px;font-size:17.5px;color:#525c5f;transform:scaleX(0.9727);">Each Calendar day</div>
<div class="b" style="left:1482.0px;top:495.2px;width:22.0px;height:22.6px;background:#ff1200;border-radius:3px;"></div>
<svg class="b" style="left:1484.0px;top:499.0px;" width="18" height="16" viewBox="0 0 18 16"><path d="M2.200 8.600l4.600 4.300 8.200-9.600" fill="none" stroke="#fff" stroke-width="2"/></svg>
<div class="t" style="left:1510.70px;top:498.70px;font-size:17.5px;color:#525c5f;transform:scaleX(0.8947);">On</div>
<div class="b" style="left:1482.2px;top:531.3px;width:132.8px;height:36.1px;background:#fff;border:1px solid #bcc9cc;border-radius:5px 0 0 5px;box-sizing:border-box;"></div>
<div class="b" style="left:1614.0px;top:531.3px;width:107.5px;height:36.1px;background:#525e5e;border-radius:0 4px 4px 0;"></div>
<div class="t" style="left:1493.20px;top:541.50px;font-size:17.5px;color:#525c5f;transform:scaleX(1.0116);">Dynamic Alert</div>
<div class="t" style="left:1624.30px;top:541.50px;font-size:17.5px;color:#fff;transform:scaleX(1.0364);">Static Alert</div>
<div class="t" style="left:1482.20px;top:583.80px;font-size:17.5px;color:#555a5c;font-weight:700;transform:scaleX(0.9268);">Threshold</div>
<svg class="b" style="left:1567.8px;top:583.1px;" width="18.6" height="18.6" viewBox="0 0 18.6 18.6"><circle cx="9.3" cy="9.3" r="9.3" fill="#bdbdbd"/><path d="M6.4 7.1000000000000005a2.9 2.9 0 1 1 4.4 2.5c-1 .7-1.5 1.2-1.5 2.4" fill="none" stroke="#fff" stroke-width="2"/><circle cx="9.3" cy="14.600000000000001" r="1.25" fill="#fff"/></svg>
<div class="b" style="left:1482.2px;top:606.3px;width:97.6px;height:37.5px;background:#fff;border:1px solid #bcc9cc;border-radius:5px;box-sizing:border-box;"></div>
<div class="t" style="left:1490.20px;top:617.30px;font-size:15.5px;color:#525c5f;transform:scaleX(0.9931);">&gt;</div>
<div class="b" style="left:1589.0px;top:606.3px;width:200.0px;height:37.5px;background:#fff;border:1px solid #bcc9cc;border-radius:5px;box-sizing:border-box;"></div>
<div class="t" style="left:1600.60px;top:616.80px;font-size:17.5px;color:#525c5f;transform:scaleX(0.9725);">200</div>
<div class="t" style="left:1482.00px;top:660.60px;font-size:17.5px;color:#555a5c;font-weight:700;transform:scaleX(0.9153);">Send To</div>
<div class="b" style="left:1482.0px;top:682.0px;width:307.0px;height:41.5px;background:#fff;border:1px solid #bcc9cc;border-radius:5px;box-sizing:border-box;"></div>
<div class="b" style="left:1488.0px;top:688.0px;width:183.0px;height:29.7px;background:#e6e6e6;border-radius:3px;"></div>
<svg class="b" style="left:1496.5px;top:696.0px;" width="20" height="14" viewBox="0 0 20 14"><g fill="none" stroke="#5a5a5a" stroke-width="1.800"><rect x="1" y="1" width="17.600" height="11.600"/><path d="M1.300 1.300l8.500 6.800 8.500-6.800"/></g></svg>
<div class="t" style="left:1521.80px;top:694.60px;font-size:15.8px;color:#525c5f;transform:scaleX(0.9516);">abu@moesif.com</div>
<svg class="b" style="left:1653.0px;top:698.0px;" width="10" height="10" viewBox="0 0 10 10"><path d="M1.200 1.200l7.200 7.200M8.400 1.200L1.200 8.400" stroke="#444" stroke-width="2" fill="none"/></svg>
<div class="b" style="left:1482.0px;top:726.4px;width:111.0px;height:25.2px;background:#fff;border:1.3px solid #ff1200;border-radius:4px;box-sizing:border-box;"></div>
<div class="t" style="left:1489.00px;top:731.60px;font-size:15.8px;color:#ff1200;transform:scaleX(1.0080);">New Channel</div>
<div class="t" style="left:1482.00px;top:770.70px;font-size:17.5px;color:#555a5c;font-weight:700;transform:scaleX(0.9560);">Custom Message</div>
<svg class="b" style="left:1626.9px;top:769.2px;" width="18.6" height="18.6" viewBox="0 0 18.6 18.6"><circle cx="9.3" cy="9.3" r="9.3" fill="#bdbdbd"/><path d="M6.4 7.1000000000000005a2.9 2.9 0 1 1 4.4 2.5c-1 .7-1.5 1.2-1.5 2.4" fill="none" stroke="#fff" stroke-width="2"/><circle cx="9.3" cy="14.600000000000001" r="1.25" fill="#fff"/></svg>
<div class="b" style="left:1482.0px;top:793.0px;width:307.0px;height:36.5px;background:#fff;border:1px solid #bcc9cc;border-radius:5px;box-sizing:border-box;"></div>
<div class="t" style="left:1493.00px;top:802.60px;font-size:17.5px;color:#bdbdbd;transform:scaleX(1.0249);">additional note</div>
<div class="t" style="left:1489.00px;top:844.70px;font-size:15.8px;color:#ff1200;transform:scaleX(1.0351);">Show Advanced Settings</div>
<div class="b" style="left:1482.0px;top:876.3px;width:59.8px;height:36.5px;background:#ff1200;border-radius:4px;"></div>
<div class="t" style="left:1493.00px;top:886.20px;font-size:17.5px;color:#fff;transform:scaleX(0.9690);">Back</div>
<div class="b" style="left:1547.0px;top:876.3px;width:60.0px;height:36.5px;background:#ff1200;border-radius:4px;"></div>
<div class="t" style="left:1558.50px;top:886.20px;font-size:17.5px;color:#fff;transform:scaleX(0.9401);">Save</div>
<div class="t" style="left:1482.00px;top:921.50px;font-size:17.5px;color:#ff1200;transform:scaleX(1.0304);">Alerts documentation</div>
<div class="t" style="left:1472.20px;top:972.80px;font-size:22px;color:#fff;font-weight:700;transform:scaleX(0.9474);">Alert History</div>
<svg class="b" style="left:1681.5px;top:978.0px;" width="14" height="14" viewBox="0 0 14 14"><path d="M11.600 4.300A5.300 5.300 0 1 0 12.400 9" fill="none" stroke="#ff1200" stroke-width="1.900"/><path d="M13 0.800v4.800H8.300z" fill="#ff1200"/></svg>
<div class="t" style="left:1707.50px;top:976.20px;font-size:16px;color:#ff1200;">See Latest</div>
<div class="t" style="left:1472.20px;top:1011.50px;font-size:17.5px;color:#d0d0d0;">No Recent Alerts Triggered</div>
<div class="b" style="left:1472.2px;top:1054.0px;width:105.6px;height:37.0px;border:1px solid #fff;border-radius:4px;box-sizing:border-box;"></div>
<div class="t" style="left:1483.00px;top:1064.80px;font-size:17.5px;color:#fff;transform:scaleX(0.9979);">Load More</div>
<div class="b" style="left:1729.0px;top:369.0px;width:75.0px;height:75.0px;background:#ff1200;border-radius:40px;box-shadow:0 1px 9px rgba(0,0,0,.3);"></div>
<svg class="b" style="left:1749.0px;top:388.0px;" width="32" height="37" viewBox="0 0 32 37"><g fill="none" stroke="#fff" stroke-width="2.600"><path d="M10 3.200h22"/><path d="M3.500 33.500V10.500a2.500 2.500 0 0 1 2.500-2.500h20.500a2.500 2.500 0 0 1 2.500 2.500v14a2.500 2.500 0 0 1-2.500 2.500H10.500z" stroke-linejoin="round"/></g></svg>
</body></html>
